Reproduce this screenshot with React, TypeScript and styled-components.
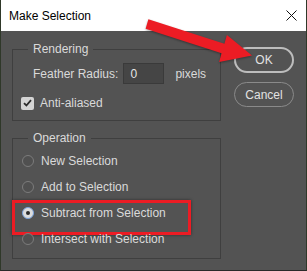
import styled, { createGlobalStyle } from "styled-components";

const GlobalStyle = createGlobalStyle`
  html, body {
    margin: 0;
    padding: 0;
    background: #384030;
  }
  * {
    box-sizing: border-box;
  }
`;

const Window = styled.div`
  position: relative;
  width: 307px;
  height: 271px;
  border-left: 1px solid #2f3829;
  border-right: 1px solid #2f3829;
  border-bottom: 1px solid #2a2a2a;
  font-family: "Liberation Sans", Arial, sans-serif;
  font-size: 12px;
  display: flex;
  flex-direction: column;
`;

const TitleBar = styled.div`
  height: 31px;
  flex: none;
  background: #ffffff;
  color: #000;
  display: flex;
  align-items: center;
  justify-content: space-between;
  padding: 0 9px 0 8px;
  font-size: 12px;
`;

const Body = styled.div`
  flex: 1;
  background: #535353;
  display: flex;
  gap: 13px;
  padding: 11px 0 0 11px;
  color: #dadada;
`;

const LeftColumn = styled.div`
  width: 209px;
  display: flex;
  flex-direction: column;
  gap: 10px;
`;

const Group = styled.fieldset`
  margin: 0;
  padding: 0;
  min-width: 0;
  border: 1px solid #3f3f3f;
  display: flex;
  flex-direction: column;
`;

const Legend = styled.legend`
  margin-left: 15px;
  padding: 0 5px;
  line-height: 14px;
  font-size: 12px;
  color: #dadada;
`;

const Row = styled.div<{ $pad: number; $top?: number }>`
  display: flex;
  align-items: center;
  padding-left: ${(p) => p.$pad}px;
  margin-top: ${(p) => p.$top ?? 0}px;
`;

const NumberField = styled.div`
  width: 41px;
  height: 21px;
  margin-left: 5px;
  background: #454545;
  border: 1px solid #3a3a3a;
  padding-left: 6px;
  display: flex;
  align-items: center;
  color: #e4e4e4;
`;

const Unit = styled.span`
  margin-left: 11px;
`;

const CheckBox = styled.span`
  width: 13px;
  height: 13px;
  border-radius: 2px;
  background: #d4d4d4;
  display: flex;
  align-items: center;
  justify-content: center;
  margin-right: 6px;
`;

const RadioList = styled.div`
  padding: 3px 0 6px;
  display: flex;
  flex-direction: column;
`;

const RadioRow = styled.div<{ $marked?: boolean }>`
  position: relative;
  height: 26px;
  display: flex;
  align-items: center;
  padding-left: 9px;

  &::after {
    content: "";
    display: ${(p) => (p.$marked ? "block" : "none")};
    position: absolute;
    left: -1px;
    top: 0;
    width: 173px;
    height: 29px;
    border: 3px solid #ec1c24;
    box-shadow: 0 0 3px rgba(0, 0, 0, 0.45);
  }
`;

const Radio = styled.span<{ $on?: boolean }>`
  width: 12px;
  height: 12px;
  border-radius: 50%;
  margin-right: 7px;
  border: 1px solid ${(p) => (p.$on ? "#7aa3dd" : "#7c7c7c")};
  background: ${(p) => (p.$on ? "#dcdcdc" : "#505050")};
  display: flex;
  align-items: center;
  justify-content: center;

  &::before {
    content: "";
    display: ${(p) => (p.$on ? "block" : "none")};
    width: 4px;
    height: 4px;
    border-radius: 50%;
    background: #2a2a2a;
  }
`;

const ButtonColumn = styled.div`
  margin-top: 5px;
  display: flex;
  flex-direction: column;
  gap: 9px;
`;

const Button = styled.button<{ $primary?: boolean }>`
  width: 60px;
  height: ${(p) => (p.$primary ? 26 : 25)}px;
  border-radius: 13px;
  background: transparent;
  border: ${(p) => (p.$primary ? "2px solid #bdbdbd" : "1px solid #8a8a8a")};
  color: #e2e2e2;
  font-family: "Liberation Sans", Arial, sans-serif;
  font-size: 12px;
  padding: 0;
`;

const ArrowLayer = styled.svg`
  position: absolute;
  left: 0;
  top: 0;
  pointer-events: none;
  filter: drop-shadow(0 1px 1px rgba(0, 0, 0, 0.35));
`;

const options = [
  "New Selection",
  "Add to Selection",
  "Subtract from Selection",
  "Intersect with Selection",
];

export default function App() {
  return (
    <>
      <GlobalStyle />
      <Window>
        <TitleBar>
          <span>Make Selection</span>
          <svg width="11" height="11" viewBox="0 0 11 11">
            <path d="M0.5 0.5 L10.5 10.5 M10.5 0.5 L0.5 10.5" stroke="#111" strokeWidth="1" />
          </svg>
        </TitleBar>
        <Body>
          <LeftColumn>
            <Group>
              <Legend>Rendering</Legend>
              <Row $pad={20} $top={7}>
                <span>Feather Radius:</span>
                <NumberField>0</NumberField>
                <Unit>pixels</Unit>
              </Row>
              <Row $pad={8} $top={12} style={{ marginBottom: 10, height: 14 }}>
                <CheckBox>
                  <svg width="9" height="8" viewBox="0 0 9 8">
                    <path d="M1 4.2 L3.4 6.5 L8 1.2" stroke="#2b2b2b" strokeWidth="1.8" fill="none" />
                  </svg>
                </CheckBox>
                <span>Anti-aliased</span>
              </Row>
            </Group>
            <Group>
              <Legend>Operation</Legend>
              <RadioList>
                {options.map((o, i) => (
                  <RadioRow key={o} $marked={i === 2}>
                    <Radio $on={i === 2} />
                    <span>{o}</span>
                  </RadioRow>
                ))}
              </RadioList>
            </Group>
          </LeftColumn>
          <ButtonColumn>
            <Button $primary>OK</Button>
            <Button>Cancel</Button>
          </ButtonColumn>
        </Body>
        <ArrowLayer width="307" height="271" viewBox="0 0 307 271">
          <polygon
            points="147.4,19.2 223.4,43.7 225.9,35 251,55.5 218.1,62 220.6,53.3 144.6,28.8"
            fill="#ec1c24"
          />
        </ArrowLayer>
      </Window>
    </>
  );
}
